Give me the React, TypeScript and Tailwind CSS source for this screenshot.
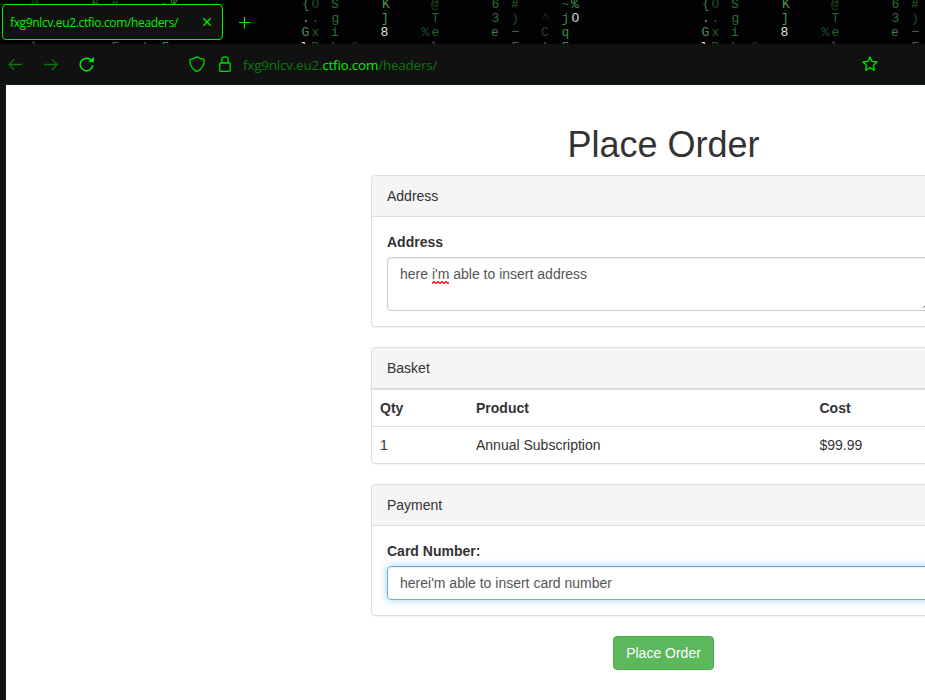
import type { ReactNode } from "react";

type Glyph = [x: number, row: number, char: string, color: string];

const RAIN_PERIOD = 400;
const TAB_RIGHT_EDGE = 223;

// One period of the falling-code theme that repeats behind the tab strip.
const RAIN: Glyph[] = [
  [302, 0, "{", "#3f7d43"],
  [311.5, 0, "O", "#1f4a22"],
  [331, 0, "S", "#2f7033"],
  [382, 0, "K", "#4a9a50"],
  [431, 0, "@", "#1f4a22"],
  [491.5, 0, "6", "#2f7033"],
  [511, 0, "#", "#28602b"],
  [561.5, 0, "~", "#2f7033"],
  [571, 0, "%", "#4a9a50"],
  [302, 1, ".", "#6d9a70"],
  [311.5, 1, ".", "#2f5f33"],
  [331.5, 1, "g", "#2f7033"],
  [381, 1, "]", "#4a9a50"],
  [431.5, 1, "T", "#28602b"],
  [491.5, 1, "3", "#2f7033"],
  [511, 1, ")", "#1f4a22"],
  [541.5, 1, "^", "#142d17"],
  [561.5, 1, "j", "#3f8a44"],
  [571.5, 1, "O", "#d0d6d0"],
  [301.5, 2, "G", "#4a8a50"],
  [311.5, 2, "x", "#28602b"],
  [331, 2, "i", "#2f7033"],
  [380.5, 2, "8", "#dde5dd"],
  [421.5, 2, "%", "#1f4a22"],
  [431.5, 2, "e", "#28602b"],
  [491, 2, "e", "#3a8040"],
  [511.5, 2, "−", "#2f7033"],
  [541, 2, "C", "#1f4a22"],
  [561.5, 2, "q", "#3f8a44"],
  [300, 3, "l", "#e0e8e0"],
  [311.5, 3, "B", "#28602b"],
  [331, 3, "h", "#2f7033"],
  [351, 3, "C", "#1c2e1e"],
  [430, 3, "l", "#28602b"],
  [491, 3, "w", "#1f4a22"],
  [511.5, 3, "F", "#3f6a44"],
  [541, 3, "'", "#4a6a4c"],
  [561.5, 3, "F", "#3f8a44"],
];

function CodeRain() {
  const glyphs = [-RAIN_PERIOD, 0, RAIN_PERIOD]
    .flatMap((shift) => RAIN.map(([x, row, char, color]): Glyph => [x + shift, row, char, color]))
    .filter(([x, row]) => x >= 0 && x < 920 && (x > TAB_RIGHT_EDGE || row === 0 || row === 3));

  return (
    <svg className="absolute inset-0" width="925" height="44" viewBox="0 0 925 44" aria-hidden="true">
      {glyphs.map(([x, row, char, color]) => (
        <text
          key={`${x}-${row}`}
          x={x}
          y={8 + row * 14 + (row === 3 ? 1 : 0)}
          fill={color}
          className="font-['Liberation_Mono',monospace] text-[13px]"
        >
          {char}
        </text>
      ))}
    </svg>
  );
}

function TabStrip() {
  return (
    <div className="relative h-11 overflow-hidden bg-[#020103]">
      <CodeRain />
      <div className="relative flex pl-0.5 pt-1">
        <div className="flex h-9 w-[221px] items-center justify-between rounded-[4px] border border-[#00f000] bg-[#111] pl-[7px] pr-2.5">
          <span className="mt-0.5 text-[12px] tracking-[-0.35px] text-[#00f000]">fxg9nlcv.eu2.ctfio.com/headers/</span>
          <svg width="10" height="10" viewBox="0 0 10 10" className="-mt-px" stroke="#00f000" strokeWidth="1.3">
            <path d="M1.3 1.3l7.4 7.4M8.7 1.3L1.3 8.7" />
          </svg>
        </div>
        <svg width="12" height="12" viewBox="0 0 12 12" className="ml-4 mt-[13px]" stroke="#00f000" strokeWidth="1.2">
          <path d="M0 5.5h11.5M5.5 0v11.5" />
        </svg>
      </div>
    </div>
  );
}

function Toolbar() {
  return (
    <div className="flex h-[41px] items-start border-b border-[#0b260d] bg-[#111]">
      <svg width="14" height="12" viewBox="0 0 14 12" className="ml-2 mt-3.5" fill="none" stroke="#08780b" strokeWidth="1.3">
        <path d="M14 6.5H.8M6.2 1.1L.8 6.5l5.4 5.4" />
      </svg>
      <svg width="14" height="12" viewBox="0 0 14 12" className="ml-[22px] mt-3.5" fill="none" stroke="#08780b" strokeWidth="1.3">
        <path d="M0 6.5h13.2M7.8 1.1L13.2 6.5l-5.4 5.4" />
      </svg>
      <svg width="16" height="16" viewBox="0 0 16 16" className="ml-[21px] mt-3" fill="none" stroke="#00f000" strokeWidth="1.5">
        <path d="M12.1 4.1A6.300 6.300 0 1 0 13.800 9.200" />
        <path d="M14.800 .8v5.400H9.400z" fill="#00f000" stroke="none" />
      </svg>
      <svg width="16" height="17" viewBox="0 0 16 17" className="ml-[94px] mt-3" fill="none" stroke="#00dc00" strokeWidth="1.3" strokeLinejoin="round">
        <path d="M8 .7C6.200 2 4 2.800 1.800 3.100c-.6.1-.9.4-.9 1C.9 9.400 3.400 13.500 8 15.700c4.600-2.200 7.100-6.300 7.100-11.600 0-.6-.3-.9-.9-1C12 2.800 9.800 2 8 .7z" />
      </svg>
      <svg width="12" height="17" viewBox="0 0 12 17" className="ml-[14px] mt-3" fill="none" stroke="#00dc00" strokeWidth="1.3">
        <rect x=".7" y="7" width="10.600" height="8.400" rx="1.300" />
        <path d="M2.700 7V4.100a3.300 3.300 0 0 1 6.600 0V7" />
      </svg>
      <span className="ml-3 mt-[11px] w-[619px] text-[13.500px] leading-5 tracking-[-0.23px] text-[#0a780d]">
        fxg9nlcv.eu2.<span className="text-[#00f000]">ctfio.com</span>/headers/
      </span>
      <svg width="16" height="16" viewBox="0 0 16 16" className="mt-3" fill="none" stroke="#00e800" strokeWidth="1.3" strokeLinejoin="round">
        <path d="M8 .9l2.100 4.500 4.900.6-3.600 3.400.9 4.900L8 11.900l-4.300 2.400.9-4.900L1 6l4.900-.6z" />
      </svg>
    </div>
  );
}

function Panel({ title, children }: { title: string; children: ReactNode }) {
  return (
    <section className="mb-5 rounded-[4px] border border-[#ddd] bg-white shadow-[0_1px_1px_rgba(0,0,0,0.05)]">
      <div className="rounded-t-[3px] border-b border-[#ddd] bg-[#f5f5f5] px-[15px] py-2.5">{title}</div>
      {children}
    </section>
  );
}

function OrderPage() {
  return (
    <main className="w-[1315px] shrink-0 pt-10 font-['Liberation_Sans',Arial,sans-serif] text-sm leading-5 text-[#333]">
      <div className="mx-auto w-[585px]">
        <h1 className="mb-2.5 text-center text-[36px] leading-10">Place Order</h1>
        <Panel title="Address">
          <div className="p-[15px]">
            <label className="mb-[5px] block font-bold">Address</label>
            <div className="relative h-[54px] rounded-[4px] border border-[#ccc] px-3 py-1.5 text-[#555] shadow-[inset_0_1px_1px_rgba(0,0,0,0.075)]">
              here{" "}
              <span className="relative">
                i'm
                <svg className="absolute -bottom-0.5 left-0" width="17" height="3" viewBox="0 0 17 3" fill="none" stroke="#f00" strokeWidth="1.2">
                  <path d="M0 2.500l2-2 2 2 2-2 2 2 2-2 2 2 2-2 2 2 1-1" />
                </svg>
              </span>{" "}
              able to insert address
              <svg className="absolute bottom-px right-0" width="16" height="8" viewBox="0 0 16 8" stroke="#777">
                <path d="M0 7l7-7M5 7l4-4" />
              </svg>
            </div>
          </div>
        </Panel>
        <Panel title="Basket">
          <div className="grid grid-cols-[96px_343.500px_1fr] border-t border-[#ddd] px-2 py-2 font-bold">
            <span>Qty</span>
            <span>Product</span>
            <span>Cost</span>
          </div>
          <div className="grid grid-cols-[96px_343.500px_1fr] border-t border-[#ddd] px-2 py-2">
            <span>1</span>
            <span>Annual Subscription</span>
            <span>$99.99</span>
          </div>
        </Panel>
        <Panel title="Payment">
          <div className="p-[15px]">
            <label className="mb-[5px] block font-bold">Card Number:</label>
            <div className="h-[34px] rounded-[4px] border border-[#66afe9] px-3 py-1.5 text-[#555] shadow-[inset_0_1px_1px_rgba(0,0,0,0.075),0_0_8px_rgba(102,175,233,0.6)]">
              herei'm able to insert card number
            </div>
          </div>
        </Panel>
        <div className="flex justify-center">
          <button className="h-[34px] w-[101px] rounded-[4px] border border-[#4cae4c] bg-[#5cb85c] text-white">Place Order</button>
        </div>
      </div>
    </main>
  );
}

export default function App() {
  return (
    <div className="flex h-[700px] w-[925px] flex-col overflow-hidden bg-white font-['Open_Sans','Noto_Sans',sans-serif]">
      <TabStrip />
      <Toolbar />
      <div className="flex min-h-0 flex-1">
        <div className="w-1.5 shrink-0 border-r border-[#0b260d] bg-[#111]" />
        <OrderPage />
      </div>
    </div>
  );
}
